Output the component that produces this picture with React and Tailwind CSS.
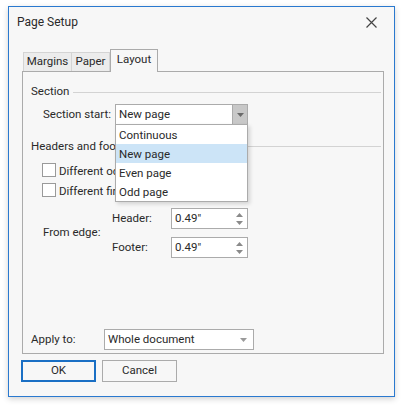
import React from "react";

const F = { fontFamily: 'Roboto, "Noto Sans", sans-serif' };

function Tri({ up = false, color = "#6b6b6b" }) {
  return (
    <svg width="7" height="4" viewBox="0 0 7 4">
      {up ? <polygon points="0,4 7,4 3.5,0" fill={color} /> : <polygon points="0,0 7,0 3.5,4" fill={color} />}
    </svg>
  );
}

function Spin({ value }) {
  return (
    <div className="flex h-[21px] w-[77px] items-center border border-[#ababab] bg-white pl-[3px] pr-[4px]">
      <span className="flex-1 whitespace-nowrap pt-px text-[11.5px] leading-none text-[#2a2a2a]">{value}</span>
      <div className="flex flex-col items-center gap-[4px]">
        <Tri up color="#8a8a8a" />
        <Tri color="#8a8a8a" />
      </div>
    </div>
  );
}

function Check({ label }) {
  return (
    <div className="flex h-[14px] items-center gap-[3px] pl-[11px]">
      <div className="h-[14px] w-[14px] shrink-0 border border-[#9a9a9a] bg-white" />
      <span className="whitespace-nowrap pt-px text-[11.5px] leading-[14px] text-[#2a2a2a]">{label}</span>
    </div>
  );
}

export default function App() {
  return (
    <div className="h-[406px] w-[403px] bg-white pl-[8px] pt-[6px]" style={F}>
      <div className="flex h-[391px] w-[387px] flex-col border border-[#2a79cf] bg-[#f7f7f7] shadow-[0_2px_6px_rgba(0,0,0,0.18)]">
        {/* Title bar */}
        <div className="flex h-[30px] items-center justify-between pl-[8px] pr-[17px]">
          <span className="text-[12px] text-[#2a2a2a]">Page Setup</span>
          <svg width="11" height="11" viewBox="0 0 11 11">
            <path d="M0.5 0.5 L10.5 10.5 M10.5 0.5 L0.5 10.5" stroke="#444" strokeWidth="1.2" />
          </svg>
        </div>
        {/* Tabs */}
        <div className="ml-[13px] mt-[12px] flex h-[22px] items-end pl-px">
          <div className="flex h-[19px] w-[49px] items-center justify-center whitespace-nowrap border border-b-0 border-[#d4d4d4] bg-[#ececec] text-[11.5px] text-[#2a2a2a]">
            Margins
          </div>
          <div className="flex h-[19px] w-[38px] items-center justify-center whitespace-nowrap border border-b-0 border-l-0 border-[#d4d4d4] bg-[#ececec] text-[11.5px] text-[#2a2a2a]">
            Paper
          </div>
          <div className="relative z-10 -mb-px flex h-[23px] w-[48px] items-center justify-center whitespace-nowrap border border-b-0 border-[#ababab] bg-[#f7f7f7] pb-[2px] text-[11.5px] text-[#2a2a2a]">
            Layout
          </div>
        </div>
        {/* Panel */}
        <div className="relative ml-[13px] flex h-[283px] w-[362px] flex-col border border-[#ababab] pl-[8px] pr-[2px] pt-[12px] pb-[3px]">
          <div className="flex h-[16px] items-center gap-[4px]">
            <span className="whitespace-nowrap text-[11.5px] leading-none text-[#2a2a2a]">Section</span>
            <div className="h-px flex-1 bg-[#d3d3d3]" />
          </div>
          <div className="relative mt-[4px] flex h-[21px] items-center pl-[12px]">
            <span className="w-[72px] shrink-0 whitespace-nowrap pt-px text-[11.5px] leading-none text-[#2a2a2a]">Section start:</span>
            <div className="flex h-[21px] w-[133px] shrink-0 items-stretch border border-[#ababab] bg-white">
              <span className="flex flex-1 items-center whitespace-nowrap pl-[3px] pt-px text-[11.5px] leading-none text-[#2a2a2a]">New page</span>
              <div className="flex w-[15px] items-center justify-center border-l border-[#ababab] bg-[#c8c8c8]">
                <Tri color="#6a6a6a" />
              </div>
            </div>
            {/* Dropdown list overlay */}
            <div className="absolute left-[84px] top-[20px] z-20 flex w-[133px] flex-col border border-[#ababab] bg-white pb-[1px] shadow-[2px_2px_4px_rgba(0,0,0,0.15)]">
              <div className="flex h-[19px] items-center whitespace-nowrap pl-[3px] pt-[3px] text-[11.5px] leading-none text-[#2a2a2a]">Continuous</div>
              <div className="flex h-[19px] items-center whitespace-nowrap bg-[#cce4f7] pl-[3px] pt-[3px] text-[11.5px] leading-none text-[#2a2a2a]">New page</div>
              <div className="flex h-[19px] items-center whitespace-nowrap pl-[3px] pt-[3px] text-[11.5px] leading-none text-[#2a2a2a]">Even page</div>
              <div className="flex h-[18px] items-center whitespace-nowrap pl-[3px] pt-[3px] text-[11.5px] leading-none text-[#2a2a2a]">Odd page</div>
            </div>
          </div>
          <div className="mt-[13px] flex h-[16px] items-center gap-[4px]">
            <span className="shrink-0 whitespace-nowrap text-[11.5px] leading-[16px] text-[#2a2a2a]">Headers and footers</span>
            <div className="h-px flex-1 bg-[#d3d3d3]" />
          </div>
          <div className="mt-[9px]">
            <Check label="Different odd and even pages" />
          </div>
          <div className="mt-[6px]">
            <Check label="Different first page" />
          </div>
          <div className="mt-[11px] flex items-center pl-[12px]">
            <span className="w-[69px] shrink-0 whitespace-nowrap text-[11.5px] leading-none text-[#2a2a2a]">From edge:</span>
            <div className="flex flex-col gap-[8px]">
              <div className="flex items-center">
                <span className="w-[59px] shrink-0 whitespace-nowrap text-[11.5px] leading-none text-[#2a2a2a]">Header:</span>
                <Spin value={'0.49"'} />
              </div>
              <div className="flex items-center">
                <span className="w-[59px] shrink-0 whitespace-nowrap text-[11.5px] leading-none text-[#2a2a2a]">Footer:</span>
                <Spin value={'0.49"'} />
              </div>
            </div>
          </div>
          <div className="mt-auto flex items-center">
            <span className="w-[73px] shrink-0 whitespace-nowrap text-[11.5px] leading-none text-[#2a2a2a]">Apply to:</span>
            <div className="flex h-[21px] w-[150px] items-center border border-[#ababab] bg-white pl-[3px] pr-[6px]">
              <span className="flex-1 whitespace-nowrap pt-px text-[11.5px] leading-none text-[#2a2a2a]">Whole document</span>
              <Tri color="#9a9a9a" />
            </div>
          </div>
        </div>
        {/* Buttons */}
        <div className="ml-[12px] mt-[6px] flex gap-[6px]">
          <button className="flex h-[22px] w-[75px] items-center justify-center border-2 border-[#1a6fc4] bg-[#f7f7f7] text-[11.5px] text-[#2a2a2a]">
            OK
          </button>
          <button className="flex h-[22px] w-[75px] items-center justify-center border border-[#ababab] bg-[#f7f7f7] text-[11.5px] text-[#2a2a2a]">
            Cancel
          </button>
        </div>
      </div>
    </div>
  );
}
